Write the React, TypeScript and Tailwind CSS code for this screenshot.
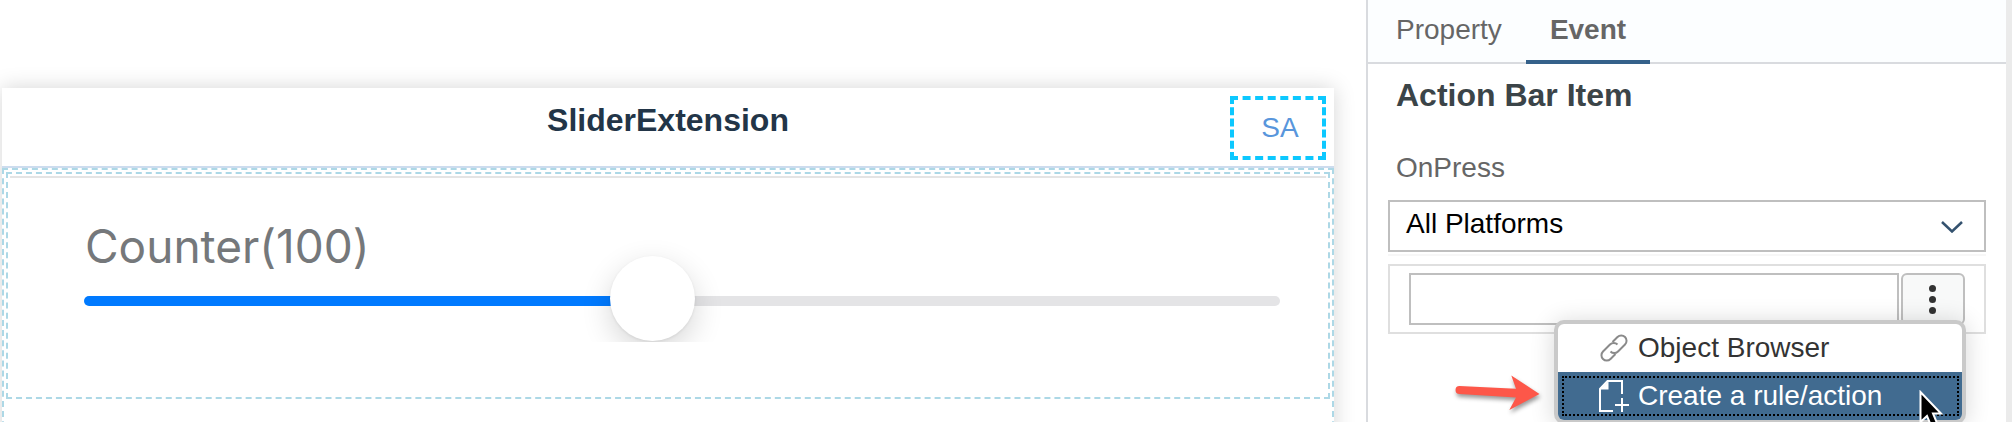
const COUNTER_VALUE = 100;

function LinkIcon() {
  return (
    <svg className="block h-7 w-7" viewBox="0 0 28 28" fill="none" stroke="#8a8a8a" strokeWidth="2">
      <path d="M12.500 8l5-5a5.300 5.300 0 0 1 7.500 7.500l-7 7a5.300 5.300 0 0 1-7.500 0" />
      <path d="M15.500 20l-5 5a5.300 5.300 0 0 1-7.500-7.500l7-7a5.300 5.300 0 0 1 7.500 0" />
    </svg>
  );
}

function AddDocumentIcon() {
  return (
    <svg className="block h-8 w-[30px]" viewBox="0 0 30 32" fill="none" stroke="#fff" strokeWidth="2">
      <path d="M14 31H1V9L8.500 1H23v13" />
      <path d="M9.500 1v8.500H1z" fill="#fff" stroke="none" />
      <path d="M23 18v14M16 25h14" />
    </svg>
  );
}

function Slider() {
  return (
    <div className="relative flex h-[85px] items-start pl-[74px] pt-[39px] [clip-path:inset(-40px_0_0_0)]">
      <div className="h-[10px] w-[536px] rounded-l-full bg-[#007aff]" />
      <div className="h-[10px] w-[660px] rounded-r-full bg-[#e4e4e6]" />
      <div className="absolute left-[600px] top-[-1px] h-[85px] w-[85px] rounded-full bg-white shadow-[0_10px_30px_rgba(0,0,0,0.16),0_1px_3px_rgba(0,0,0,0.08)]" />
    </div>
  );
}

function Canvas() {
  return (
    <main className="h-[422px] w-[1366px] overflow-hidden pl-[2px] pt-[88px]">
      <section className="h-[400px] w-[1332px] bg-white shadow-[0_0_20px_rgba(0,0,0,0.17)]">
        <header className="flex h-20 items-start border-b-2 border-[#cddcee] pr-2 pt-2">
          <h1 className="w-[1228px] pl-[104px] pt-[6px] text-center text-[32px] font-bold leading-9 text-[#223548]">
            SliderExtension
          </h1>
          <div className="flex h-16 w-24 items-center justify-center border-4 border-dashed border-[#0cc8ff] pl-1 text-[28px] leading-8 text-[#5896dc]">
            SA
          </div>
        </header>
        <div className="h-[320px] border-2 border-dashed border-[#add8e6] p-[2px]">
          <div className="h-[227px] border-2 border-dashed border-[#add8e6] p-[2px]">
            <div className="border-t-2 border-[#e4e4e4] pt-[49px]">
              <div className="mb-[-8px] flex h-[38px] items-center pl-[75px] font-['Inter',sans-serif] text-[46px] text-[#75787b]">
                Counter({COUNTER_VALUE})
              </div>
              <Slider />
            </div>
          </div>
        </div>
      </section>
    </main>
  );
}

function Tabs() {
  return (
    <nav className="flex h-16 border-b-2 border-[#d9dbdf] bg-[#fcfeff] text-[28px] leading-8 text-[#666]">
      <span className="w-[158px] pl-7 pt-[14px]">Property</span>
      <span className="h-16 w-[124px] border-b-4 border-[#35618a] pt-[14px] text-center font-bold">Event</span>
    </nav>
  );
}

function ActionMenu() {
  return (
    <div className="absolute left-[164px] top-[54px] w-[412px] rounded-[10px] border-4 border-[#c9c9c9] bg-white text-[28px] leading-8 shadow-[0_2px_24px_rgba(0,0,0,0.16)]">
      <div className="flex h-12 items-center pl-[42px] text-[#333]">
        <LinkIcon />
        <span className="pl-[10px]">Object Browser</span>
      </div>
      <div className="relative h-12 rounded-b-md bg-[#416b90] p-1 pr-[3px] text-white">
        <div className="flex h-10 items-center border-2 border-dotted border-black pl-[35px]">
          <AddDocumentIcon />
          <span className="pl-[9px]">Create a rule/action</span>
        </div>
        <svg className="absolute left-[361px] top-[18px] h-[42px] w-[26px]" viewBox="0 0 26 42">
          <path d="M1.500 2v30l6.500-6 5 12 6-2.500-5-12h8z" fill="#000" stroke="#fff" strokeWidth="2" />
        </svg>
      </div>
    </div>
  );
}

function Arrow() {
  return (
    <svg className="absolute left-[60px] top-[104px] h-[48px] w-[96px] drop-shadow-[1px_3px_2px_rgba(0,0,0,0.4)]" viewBox="0 0 96 48">
      <path d="M9.500 16 66 18.700 61.300 5.500 89.500 24 59.300 40 66 27.500 9.500 24a4 4 0 0 1 0-8z" fill="#fd5749" />
    </svg>
  );
}

function EventPanel() {
  return (
    <aside className="h-[422px] w-[640px] border-l-2 border-[#d9dbdf] bg-white">
      <Tabs />
      <h2 className="pl-7 pt-[13px] text-[32px] font-bold leading-9 text-[#3b4448]">Action Bar Item</h2>
      <div className="pl-7 pt-[39px] text-[28px] leading-8 text-[#666]">OnPress</div>
      <div className="ml-5 mt-4 flex h-[52px] w-[598px] items-start justify-between border-2 border-[#bfbfbf] pl-4 pr-[21px] pt-[6px] text-[28px] leading-8 text-black">
        <span>All Platforms</span>
        <svg className="mt-[13px] h-3 w-[22px]" viewBox="0 0 22 12" fill="none" stroke="#34526f" strokeWidth="2.500">
          <path d="M1 1l10 9.500L21 1" />
        </svg>
      </div>
      <div className="ml-5 mt-[2px] h-[2px] w-[598px] bg-[#f7f7f7]" />
      <div className="relative ml-5 mt-2 flex h-[70px] w-[598px] gap-[2px] border-2 border-[#dfdfdf] pl-[19px] pt-[7px]">
        <div className="h-[52px] w-[490px] border-2 border-[#bfbfbf]" />
        <button className="flex h-[52px] w-16 flex-col items-center gap-1 rounded-md border-2 border-[#bfbfbf] bg-[#f8f9f9] pr-px pt-[10px]">
          <span className="h-[7px] w-[7px] rounded-full bg-[#333]" />
          <span className="h-[7px] w-[7px] rounded-full bg-[#333]" />
          <span className="h-[7px] w-[7px] rounded-full bg-[#333]" />
        </button>
        <ActionMenu />
        <Arrow />
      </div>
    </aside>
  );
}

export default function App() {
  return (
    <div className="flex h-[422px] w-[2012px] overflow-hidden bg-white font-['Liberation_Sans',Arial,sans-serif]">
      <Canvas />
      <EventPanel />
      <div className="w-[6px] bg-[#ebebeb]" />
    </div>
  );
}
